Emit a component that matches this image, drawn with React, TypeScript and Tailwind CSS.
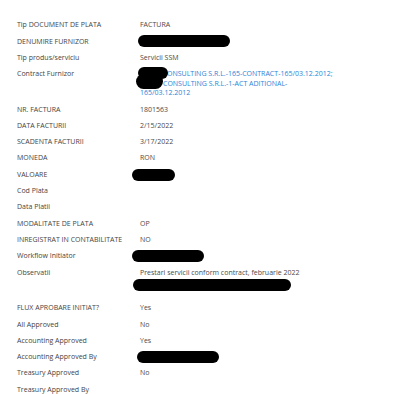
import React from 'react';

type Row = {
  label: string;
  value?: string;
  redact?: [number, number];
};

const rows: Row[] = [
  { label: 'Tip DOCUMENT DE PLATA', value: 'FACTURA' },
  { label: 'DENUMIRE FURNIZOR', redact: [-2, 92] },
  { label: 'Tip produs/serviciu', value: 'Servicii SSM' },
];

const rowsAfter: Row[] = [
  { label: 'NR. FACTURA', value: '1801563' },
  { label: 'DATA FACTURII', value: '2/15/2022' },
  { label: 'SCADENTA FACTURII', value: '3/17/2022' },
  { label: 'MONEDA', value: 'RON' },
  { label: 'VALOARE', redact: [-8, 43] },
  { label: 'Cod Plata' },
  { label: 'Data Platii' },
  { label: 'MODALITATE DE PLATA', value: 'OP' },
  { label: 'INREGISTRAT IN CONTABILITATE', value: 'NO' },
  { label: 'Workflow Initiator', redact: [-8, 72] },
];

const approvals: Row[] = [
  { label: 'FLUX APROBARE INITIAT?', value: 'Yes' },
  { label: 'All Approved', value: 'No' },
  { label: 'Accounting Approved', value: 'Yes' },
  { label: 'Accounting Approved By', redact: [-3, 82] },
  { label: 'Treasury Approved', value: 'No' },
  { label: 'Treasury Approved By' },
];

const Blob = ({ w, x = 0, className = '' }: { w: number; x?: number; className?: string }) => (
  <span
    className={`inline-block h-[12px] rounded-full bg-black align-middle ${className}`}
    style={{ width: w, marginLeft: x }}
  />
);

const Field = ({ row }: { row: Row }) => (
  <div className="flex h-[16.3px] items-center">
    <div className="w-[140px] shrink-0 whitespace-nowrap pl-[17px] text-[#444]">{row.label}</div>
    <div className="whitespace-nowrap text-[#4a4a4a]">
      {row.value}
      {row.redact && <Blob x={row.redact[0]} w={row.redact[1]} />}
    </div>
  </div>
);

export default function App() {
  return (
    <div
      className="h-[394px] w-[400px] overflow-hidden bg-white pt-[17px] text-[7px] leading-[9.5px]"
      style={{ fontFamily: '"Open Sans", "Noto Sans", sans-serif' }}
    >
      {rows.map(r => (
        <Field key={r.label} row={r} />
      ))}

      <div className="flex py-[3.4px]">
        <div className="w-[140px] shrink-0 pl-[17px] text-[#444]">Contract Furnizor</div>
        <div className="relative whitespace-nowrap text-[#2b84d8]">
          <div>
            <span className="inline-block w-[27px]" />ONSULTING S.R.L.-165-CONTRACT-165/03.12.2012;
          </div>
          <div>
            <span className="inline-block w-[23px]" />CONSULTING S.R.L.-1-ACT ADITIONAL-
          </div>
          <div>165/03.12.2012</div>
          <span className="absolute left-[-2px] top-[-2px] h-[12px] w-[30px] rounded-full bg-black" />
          <span className="absolute left-[-4px] top-[5px] h-[15px] w-[27px] rounded-[8px] bg-black" />
        </div>
      </div>

      {rowsAfter.map(r => (
        <Field key={r.label} row={r} />
      ))}

      <div className="flex h-[35.7px] pt-[3.4px]">
        <div className="w-[140px] shrink-0 pl-[17px] text-[#444]">Observatii</div>
        <div className="flex flex-col text-[#4a4a4a]">
          <div>Prestari servicii conform contract, februarie 2022</div>
          <Blob x={-7} w={158} className="mt-[1.5px]" />
        </div>
      </div>

      {approvals.map(r => (
        <Field key={r.label} row={r} />
      ))}
    </div>
  );
}
